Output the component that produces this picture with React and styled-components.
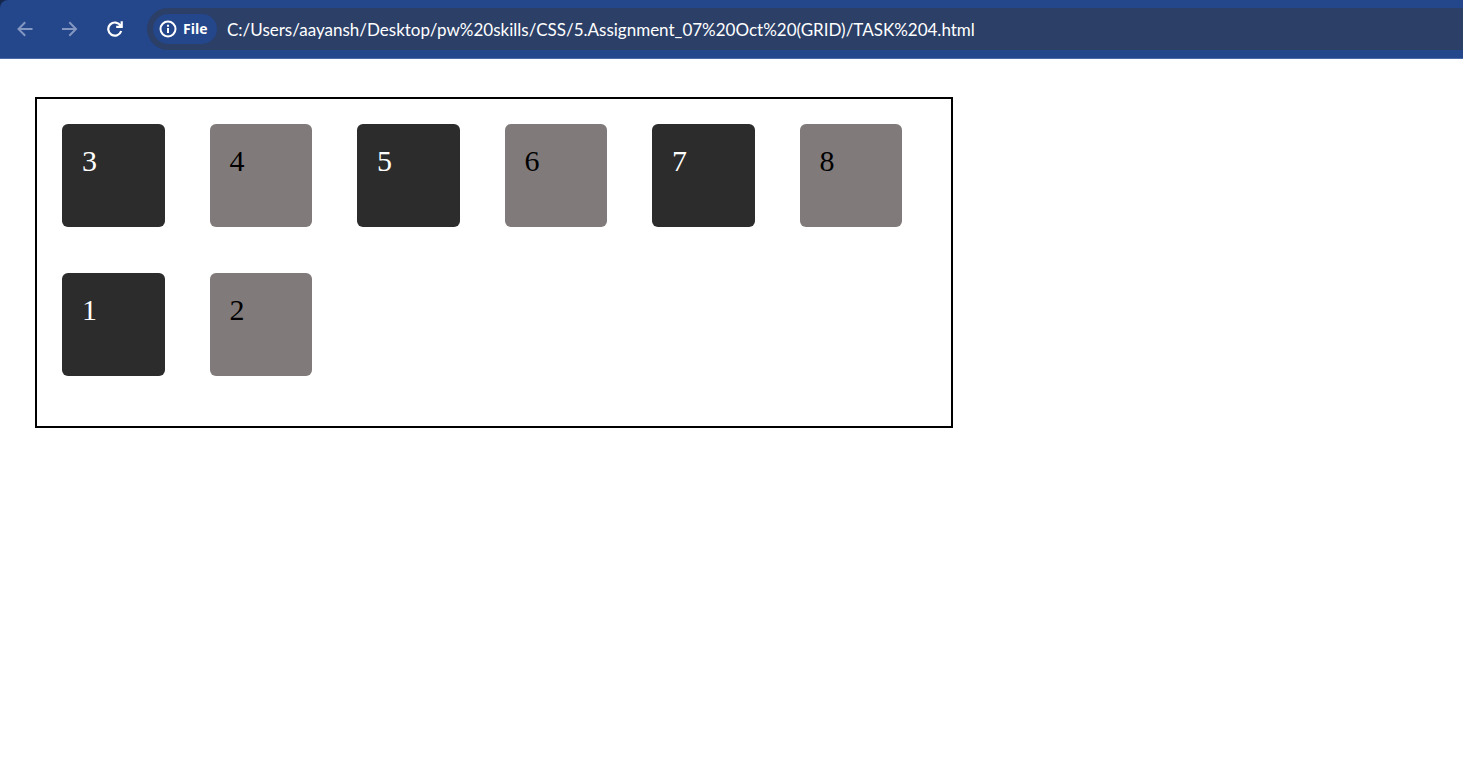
import React from "react";
import styled, { createGlobalStyle } from "styled-components";

const GlobalStyle = createGlobalStyle`
  *, *::before, *::after { box-sizing: border-box; }
  body { margin: 0; background: #fff; }
`;

const ToolbarFrame = styled.header`
  background: #14264b;
`;

const Toolbar = styled.div`
  display: flex;
  align-items: center;
  height: 59px;
  padding: 0 0 0 9px;
  background: #24468a;
  border-bottom: 1px solid #4b69a8;
  border-top-left-radius: 8px;
`;

const NavButtons = styled.nav`
  display: flex;
  gap: 13px;
  margin-right: 16px;
`;

const NavButton = styled.button`
  display: flex;
  align-items: center;
  justify-content: center;
  width: 32px;
  height: 32px;
  padding: 0;
  border: 0;
  background: transparent;
  color: ${({ $dim }) => ($dim ? "#8397c1" : "#fff")};
`;

const AddressBar = styled.div`
  display: flex;
  flex: 1;
  align-items: center;
  gap: 10px;
  min-width: 0;
  height: 42px;
  padding-left: 6px;
  background: #2c3f67;
  border-radius: 21px 0 0 21px;
`;

const SchemeChip = styled.button`
  display: flex;
  flex: none;
  align-items: center;
  gap: 6px;
  width: 64px;
  height: 30px;
  padding: 0 0 0 6px;
  border: 0;
  border-radius: 15px;
  background: #24468a;
  color: #fff;
  font: 700 14px/20px "Open Sans", "Noto Sans", sans-serif;
`;

const UrlInput = styled.input`
  flex: 1;
  min-width: 0;
  height: 30px;
  padding: 0;
  border: 0;
  outline: 0;
  background: transparent;
  color: #fff;
  font: 400 17px/24px "Segoe UI", Lato, "Open Sans", sans-serif;
`;

const Page = styled.main`
  padding: 38px 35px;
`;

const GridContainer = styled.section`
  display: grid;
  grid-template-columns: repeat(6, 1fr);
  gap: 46px 45px;
  max-width: 918px;
  padding: 25px 49px 50px 25px;
  border: 2px solid #000;
`;

const GridItem = styled.div`
  height: 103px;
  padding: 20px;
  border-radius: 6px;
  background: ${({ $dark }) => ($dark ? "#2c2c2c" : "#807b7a")};
  color: ${({ $dark }) => ($dark ? "#fff" : "#000")};
  font: 30px/34px "Liberation Serif", "Times New Roman", serif;
`;

const BackIcon = () => (
  <svg width="16" height="16" viewBox="0 0 16 16" fill="none" stroke="currentColor" strokeWidth="2" aria-hidden="true">
    <path d="M15.5 8H2M8.2 1.2 1.5 8l6.7 6.8" />
  </svg>
);

const ForwardIcon = () => (
  <svg width="16" height="16" viewBox="0 0 16 16" fill="none" stroke="currentColor" strokeWidth="2" aria-hidden="true">
    <path d="M0 8H13.5M7.3 1.2 14 8l-6.7 6.8" />
  </svg>
);

const ReloadIcon = () => (
  <svg width="16" height="16" viewBox="0 0 16 16" fill="none" stroke="currentColor" strokeWidth="2.2" aria-hidden="true">
    <path d="M13.6 4.8A6.6 6.6 0 1 0 14.2 10M14.7 .2v5.6H9.2" />
  </svg>
);

const InfoIcon = () => (
  <svg width="18" height="18" viewBox="0 0 18 18" fill="none" stroke="currentColor" strokeWidth="2" aria-hidden="true">
    <circle cx="9" cy="9" r="7.5" />
    <path d="M9 8v5M9 4.8v2" />
  </svg>
);

const items = [3, 4, 5, 6, 7, 8, 1, 2];

export default function App() {
  return (
    <>
      <GlobalStyle />
      <ToolbarFrame>
        <Toolbar>
          <NavButtons aria-label="History">
            <NavButton $dim type="button" aria-label="Back"><BackIcon /></NavButton>
            <NavButton $dim type="button" aria-label="Forward"><ForwardIcon /></NavButton>
            <NavButton type="button" aria-label="Reload"><ReloadIcon /></NavButton>
          </NavButtons>
          <AddressBar>
            <SchemeChip type="button"><InfoIcon />File</SchemeChip>
            <UrlInput
              type="text"
              aria-label="Address"
              defaultValue="C:/Users/aayansh/Desktop/pw%20skills/CSS/5.Assignment_07%20Oct%20(GRID)/TASK%204.html"
            />
          </AddressBar>
        </Toolbar>
      </ToolbarFrame>
      <Page>
        <GridContainer>
          {items.map((n) => (
            <GridItem key={n} $dark={n % 2 === 1}>{n}</GridItem>
          ))}
        </GridContainer>
      </Page>
    </>
  );
}
